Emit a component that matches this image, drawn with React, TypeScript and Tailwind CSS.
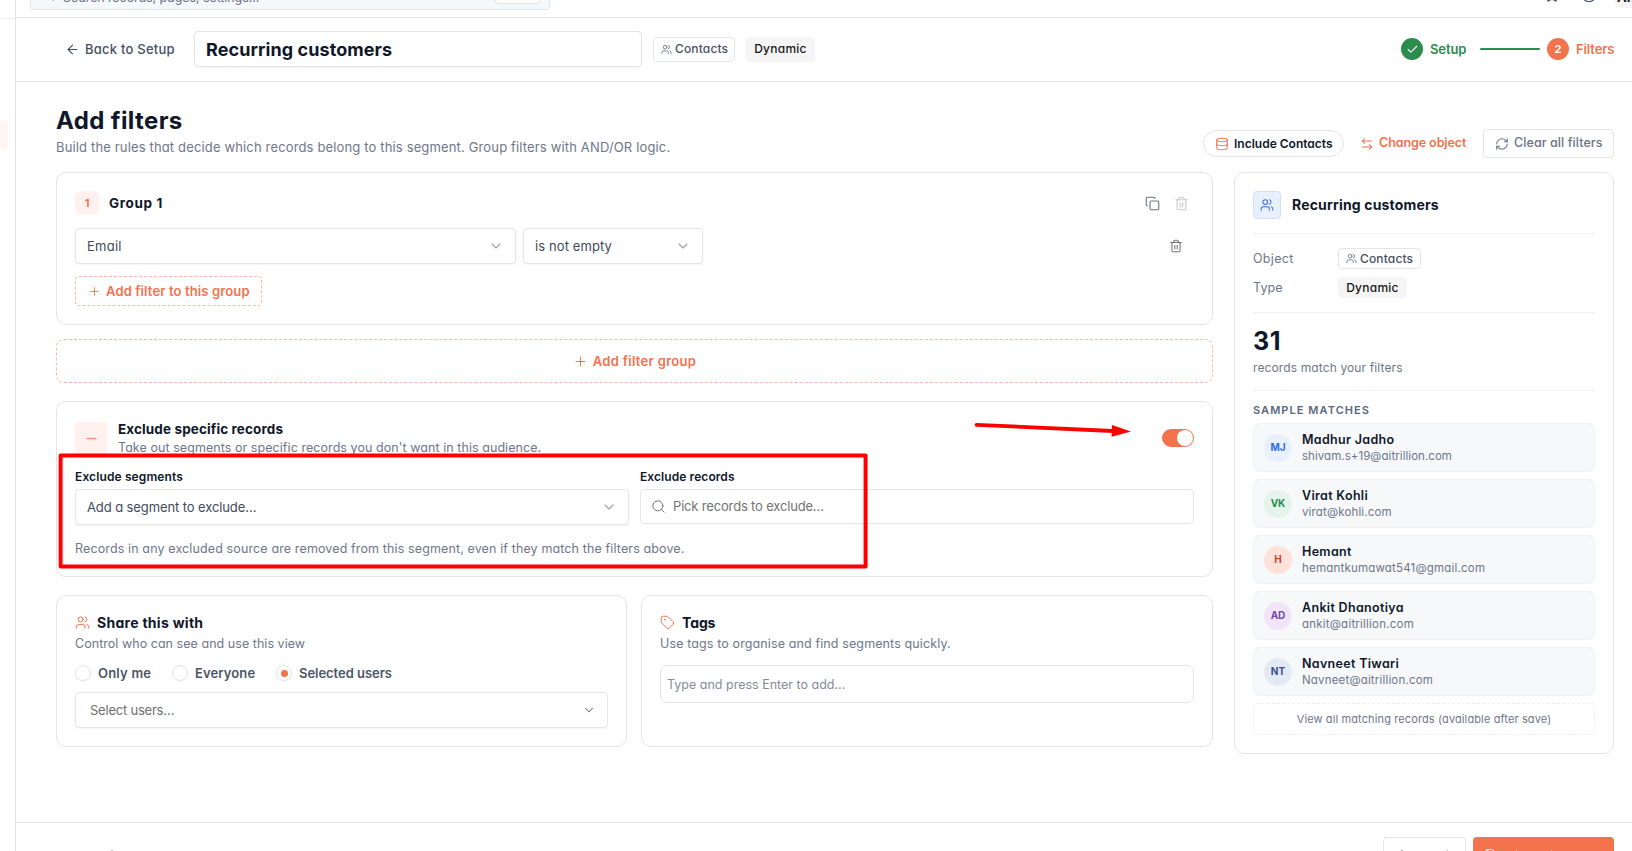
import React from "react";
import {
  ArrowLeft,
  ArrowLeftRight,
  Check,
  ChevronDown,
  CircleHelp,
  Copy,
  Database,
  Minus,
  Plus,
  RefreshCw,
  Save,
  Search,
  Star,
  Tag,
  Trash2,
  Users,
} from "lucide-react";

const matches = [
  { initials: "MJ", name: "Madhur Jadho", email: "shivam.s+19@aitrillion.com", tone: "bg-[#e8effd] text-[#2f6bea]", fit: "tracking-[0.05px]" },
  { initials: "VK", name: "Virat Kohli", email: "virat@kohli.com", tone: "bg-[#e4f4ea] text-[#2d8a50]", fit: "tracking-[0.15px]" },
  { initials: "H", name: "Hemant", email: "hemantkumawat541@gmail.com", tone: "bg-[#fde1da] text-[#c9482a]", fit: "tracking-[0.2px]" },
  { initials: "AD", name: "Ankit Dhanotiya", email: "ankit@aitrillion.com", tone: "bg-[#f1e4f9] text-[#6f4a9e]", fit: "tracking-[0.22px]" },
  { initials: "NT", name: "Navneet Tiwari", email: "Navneet@aitrillion.com", tone: "bg-[#e4e9f6] text-[#3d4c94]", fit: "tracking-[0.18px]" },
];

function ContactsBadge({ className }: { className: string }) {
  return (
    <span className={`flex items-center gap-[3px] rounded-[4px] border border-[#e4e4e7] bg-white text-[12px] font-medium tracking-[0.15px] text-[#475063] ${className}`}>
      <Users size={11} strokeWidth={1.9} className="shrink-0 text-[#6b7285]" />
      Contacts
    </span>
  );
}

function DynamicBadge({ className }: { className: string }) {
  return (
    <span className={`flex items-center justify-center rounded-[4px] bg-[#f5f5f5] text-[12px] font-medium tracking-[0.26px] text-[#171717] ${className}`}>
      Dynamic
    </span>
  );
}

function SelectBox({ text, className }: { text: string; className: string }) {
  return (
    <div className={`flex h-9 items-center justify-between rounded-[4px] border border-[#e4e4e7] bg-white px-[11px] text-[13px] text-[#3f4a5a] shadow-xs ${className}`}>
      <span className="pt-[2px]">{text}</span>
      <ChevronDown size={16} strokeWidth={1.7} className="text-[#9b9fa8]" />
    </div>
  );
}

function Radio({ label, checked, className }: { label: string; checked?: boolean; className: string }) {
  return (
    <div className={`flex items-center gap-[7px] text-[13px] font-semibold text-[#4b5567] ${className}`}>
      <span className="flex size-4 shrink-0 items-center justify-center rounded-full border border-[#e4e4e7] shadow-xs">
        {checked && <span className="size-[7px] rounded-full bg-[#f4724c]" />}
      </span>
      <span className="pt-[2px]">{label}</span>
    </div>
  );
}

function TopBar() {
  return (
    <div className="h-[18px] shrink-0 overflow-hidden border-b border-[#e4e4e7]">
      <div className="-mt-5 flex h-[30px] items-center pl-[14px]">
        <div className="flex h-[30px] w-[520px] items-center rounded-[4px] border border-[#dfe3ea] bg-[#f5f8fb] pr-[9px] pl-[10px] text-[12.5px] text-[#6b7285]">
          <Search size={14} strokeWidth={1.75} />
          <span className="ml-[8px] pt-[6px] tracking-[-0.08px]">Search records, pages, settings...</span>
          <span className="mb-[2px] ml-auto h-5 w-[45px] rounded-[3px] border border-[#dfe3ea] bg-white" />
        </div>
        <div className="ml-auto flex items-center text-[#4b5568]">
          <Star size={16} strokeWidth={1.75} />
          <CircleHelp size={16} strokeWidth={1.75} className="ml-[21px]" />
          <span className="ml-[18px] flex h-[26px] w-[17px] items-center overflow-hidden rounded-bl-[5px] bg-[#f4f4f5] pt-[5px] pl-[2px] text-[13px] font-bold text-[#171717]">
            AR
          </span>
        </div>
      </div>
    </div>
  );
}

function SegmentBar() {
  return (
    <div className="h-16 shrink-0 border-b border-[#e4e4e7] pt-[13px] pr-[18px] pl-[49px]">
      <div className="flex h-9 items-center">
        <div className="flex w-[129px] items-center gap-[5px] text-[13px] font-medium tracking-[0.24px] text-[#475063]">
          <ArrowLeft size={15} strokeWidth={1.7} />
          <span className="pt-[2px]">Back to Setup</span>
        </div>
        <div className="flex h-9 w-[448px] items-center rounded-[4px] border border-[#e4e4e7] px-[11px] text-[18px] font-bold tracking-[0.08px] text-[#0f172a] shadow-xs">
          Recurring customers
        </div>
        <ContactsBadge className="ml-[11px] h-[25px] w-[82px] pl-[7px]" />
        <DynamicBadge className="ml-[11px] h-[25px] w-[69px]" />
        <div className="ml-auto flex items-center text-[13px] font-semibold">
          <span className="flex size-[22px] items-center justify-center rounded-full bg-[#2c8c4e] text-white">
            <Check size={13} strokeWidth={2} />
          </span>
          <span className="ml-[7px] w-[36px] pt-[2px] tracking-[-0.1px] text-[#2c8c4e]">Setup</span>
          <span className="ml-[14px] h-[2px] w-[60px] rounded-full bg-[#2c8c4e]" />
          <span className="ml-[7px] flex size-[22px] items-center justify-center rounded-full bg-[#f4724c] text-[11px] font-bold text-white">2</span>
          <span className="ml-[7px] w-[38px] pt-[2px] tracking-[-0.1px] text-[#f4724c]">Filters</span>
        </div>
      </div>
    </div>
  );
}

function GroupCard() {
  return (
    <div className="h-[153px] rounded-[10px] border border-[#e4e4e7] p-[18px]">
      <div className="flex h-6 items-center">
        <span className="flex size-6 items-center justify-center rounded-[6px] bg-[#fff2ee] text-[11px] font-bold text-[#f4724c]">1</span>
        <span className="ml-[10px] text-[13.5px] font-bold tracking-[0.65px] text-[#0f172a]">Group 1</span>
        <div className="mr-px ml-auto flex gap-[5px] pt-[1px]">
          <span className="flex size-6 items-center justify-center">
            <Copy size={15} strokeWidth={1.75} className="text-[#6b7285]" />
          </span>
          <span className="flex size-6 items-center justify-center">
            <Trash2 size={15} strokeWidth={1.75} className="text-[#c7c9d0]" />
          </span>
        </div>
      </div>
      <div className="mt-[13px] flex h-9 items-center">
        <SelectBox text="Email" className="w-[441px] tracking-[0.25px]" />
        <SelectBox text="is not empty" className="ml-[7px] w-[180px] tracking-[0.1px]" />
        <span className="ml-auto flex w-9 justify-center">
          <Trash2 size={14} strokeWidth={1.75} className="text-[#6f6f6f]" />
        </span>
      </div>
      <div className="mt-3 flex h-[30px] w-[187px] items-center gap-[5px] rounded-[4px] border border-dashed border-[#f9b8a4] pl-[12px] text-[13px] font-semibold tracking-[0.13px] whitespace-nowrap text-[#f4724c]">
        <Plus size={13} strokeWidth={1.6} />
        <span className="pt-[2px]">Add filter to this group</span>
      </div>
    </div>
  );
}

function ExcludeCard() {
  return (
    <div className="mt-[18px] h-[176px] rounded-[10px] border border-[#e4e4e7] px-[18px] pt-[17px]">
      <div className="flex h-[38px] items-center">
        <span className="flex size-8 items-center justify-center rounded-[4px] bg-[#fff2ee] text-[#f99679]">
          <Minus size={15} strokeWidth={2.2} />
        </span>
        <div className="ml-[11px]">
          <div className="h-[19px] text-[13.5px] leading-[18px] font-bold tracking-[0.12px] text-[#0f172a]">Exclude specific records</div>
          <div className="h-[18px] text-[12.5px] leading-[18px] tracking-[0.06px] text-[#6f7689]">
            Take out segments or specific records you don't want in this audience.
          </div>
        </div>
        <span className="ml-auto flex h-[18px] w-8 items-center justify-end rounded-full bg-[#f4724c] p-px">
          <span className="size-4 rounded-full bg-white" />
        </span>
      </div>
      <div className="mt-3 grid grid-cols-2 gap-[11px] text-[12px] font-semibold text-[#0f172a]">
        <div>
          <div className="mb-1 h-4 leading-4 tracking-[0.12px]">Exclude segments</div>
          <SelectBox text="Add a segment to exclude…" className="font-normal tracking-[-0.1px]" />
        </div>
        <div>
          <div className="mb-1 h-4 leading-4 tracking-[0.08px]">Exclude records</div>
          <div className="flex h-[35px] items-center gap-[7px] rounded-[4px] border border-[#e4e4e7] px-[10px] text-[13px] font-normal tracking-[-0.17px] text-[#737373]">
            <Search size={15} strokeWidth={1.6} />
            <span className="pt-px">Pick records to exclude…</span>
          </div>
        </div>
      </div>
      <div className="mt-[15px] h-[18px] text-[12.5px] leading-[18px] tracking-[0.125px] text-[#6f7689]">
        Records in any excluded source are removed from this segment, even if they match the filters above.
      </div>
    </div>
  );
}

function ShareAndTags() {
  return (
    <div className="mt-[18px] grid h-[152px] grid-cols-[571px_1fr] gap-[14px]">
      <div className="rounded-[10px] border border-[#e4e4e7] p-[18px]">
        <div className="flex h-[18px] items-center gap-[7px] text-[14px] font-bold tracking-[0.28px] text-[#0f172a]">
          <Users size={15} strokeWidth={1.6} className="mb-px text-[#f4724c]" />
          <span className="pb-[2px]">Share this with</span>
        </div>
        <div className="mt-[3px] h-[18px] text-[12.5px] leading-[18px] tracking-[0.04px] text-[#6f7689]">Control who can see and use this view</div>
        <div className="mt-3 flex h-4 items-center">
          <Radio label="Only me" className="w-[97px] tracking-[0.2px]" />
          <Radio label="Everyone" className="w-[104px] tracking-[0.12px]" />
          <Radio label="Selected users" checked className="tracking-[-0.04px]" />
        </div>
        <div className="mt-[11px] flex h-9 items-center justify-between rounded-[4px] border border-[#e4e4e7] pr-[11px] pl-[14px] text-[13px] tracking-[-0.22px] text-[#6f6f6f] shadow-xs">
          <span className="pt-[2px]">Select users…</span>
          <ChevronDown size={14} strokeWidth={1.75} />
        </div>
      </div>
      <div className="rounded-[10px] border border-[#e4e4e7] p-[18px]">
        <div className="flex h-[18px] items-center gap-[7px] text-[14px] font-bold tracking-[-0.1px] text-[#0f172a]">
          <Tag size={15} strokeWidth={1.6} className="mb-px text-[#f4724c]" />
          <span className="pb-[2px]">Tags</span>
        </div>
        <div className="mt-[3px] h-[18px] text-[12.5px] leading-[18px] tracking-[0.12px] text-[#6f7689]">Use tags to organise and find segments quickly.</div>
        <div className="mt-3 flex h-[38px] items-center rounded-[7px] border border-[#e4e4e7] pl-[6px] text-[12.5px] text-[#868b97]">
          <span className="pt-[2px]">Type and press Enter to add…</span>
        </div>
      </div>
    </div>
  );
}

function SummaryCard() {
  return (
    <aside className="h-[582px] w-[380px] shrink-0 rounded-[10px] border border-[#e4e4e7] px-[18px] pt-[18px]">
      <div className="flex h-7 items-center gap-[11px]">
        <span className="flex size-7 items-center justify-center rounded-[4px] border border-[#d0dffb] bg-[#e8f0fe] text-[#3b74ec]">
          <Users size={14} strokeWidth={1.75} />
        </span>
        <span className="pb-px text-[14px] font-bold tracking-[0.17px] text-[#0f172a]">Recurring customers</span>
      </div>
      <div className="mt-[14px] border-t border-[#eef0f2]" />
      <div className="mt-[14px] flex h-[21px] items-center text-[12.5px] text-[#6f7689]">
        <span className="w-[85px] pt-[2px] tracking-[0.3px]">Object</span>
        <ContactsBadge className="h-[21px] w-[83px] pl-[7px]" />
      </div>
      <div className="mt-2 flex h-[21px] items-center text-[12.5px] text-[#6f7689]">
        <span className="w-[85px] pt-[2px] tracking-[0.1px]">Type</span>
        <DynamicBadge className="h-[21px] w-[69px]" />
      </div>
      <div className="mt-[14px] border-t border-[#eef0f2]" />
      <div className="mt-[14px] h-7 text-[25px] leading-7 font-bold tracking-[0.6px] text-[#0f172a]">31</div>
      <div className="mt-1 h-[18px] text-[12px] leading-[18px] tracking-[0.12px] text-[#6f7689]">records match your filters</div>
      <div className="mt-[13px] border-t border-[#eef0f2]" />
      <div className="mt-[11px] h-4 text-[11px] leading-4 font-semibold tracking-[1.06px] text-[#5b6780]">SAMPLE MATCHES</div>
      <div className="mt-[5px] flex flex-col gap-[7px]">
        {matches.map((m) => (
          <div key={m.name} className="flex h-[49px] items-center gap-[10px] rounded-[7px] border border-[#eff1f4] bg-[#f6f8fa] px-[10px]">
            <span className={`flex size-7 items-center justify-center rounded-full text-[10px] font-bold ${m.tone}`}>{m.initials}</span>
            <div>
              <div className="h-4 text-[12.5px] leading-4 font-semibold tracking-[0.32px] text-[#0f172a]">{m.name}</div>
              <div className={`h-4 text-[11.5px] leading-4 text-[#6f7689] ${m.fit}`}>{m.email}</div>
            </div>
          </div>
        ))}
        <div className="flex h-8 items-center justify-center rounded-[4px] border border-dashed border-[#eceef1] text-[11px] tracking-[0.12px] text-[#6f7689]">
          View all matching records (available after save)
        </div>
      </div>
    </aside>
  );
}

export default function App() {
  return (
    <div className="relative flex h-[851px] w-full overflow-hidden bg-white font-['Inter',sans-serif] [font-feature-settings:'cv11']">
      <div className="w-4 shrink-0 border-r border-[#e2e2e8]">
        <div className="h-[19px] border-b border-[#eeeef1]" />
        <div className="mt-[101px] h-[29px] w-2 rounded-r-[5px] bg-[#fff5f2]" />
      </div>

      <div className="flex min-w-0 flex-1 flex-col">
        <TopBar />
        <SegmentBar />

        <main className="h-[740px] shrink-0 pt-[22px] pr-[18px] pl-[40px]">
          <div className="flex h-[54px] items-end justify-between">
            <div>
              <h1 className="h-[33px] text-[24px] leading-[33px] font-bold tracking-[0.38px] text-[#0f172a]">Add filters</h1>
              <p className="mt-px h-5 text-[13px] leading-[19px] tracking-[0.15px] text-[#6f7689]">
                Build the rules that decide which records belong to this segment. Group filters with AND/OR logic.
              </p>
            </div>
            <div className="flex h-[29px] items-center whitespace-nowrap">
              <div className="flex h-[27px] w-[141px] items-center gap-[5px] rounded-full border border-[#e4e4e7] pl-[11px] text-[12px] font-semibold text-[#0f172a]">
                <Database size={14} strokeWidth={1.75} className="text-[#f4724c]" />
                Include Contacts
              </div>
              <div className="ml-[16px] flex w-[123px] items-center gap-[5px] text-[12.5px] font-semibold tracking-[-0.08px] text-[#f4724c]">
                <ArrowLeftRight size={14} strokeWidth={1.75} />
                Change object
              </div>
              <div className="flex h-[29px] w-[131px] items-center gap-[5px] rounded-[4px] border border-[#e4e4e7] pl-[11px] text-[12.5px] font-medium tracking-[0.08px] text-[#6b7285]">
                <RefreshCw size={14} strokeWidth={1.75} />
                Clear all filters
              </div>
            </div>
          </div>

          <div className="mt-[14px] flex items-start gap-[21px]">
            <div className="min-w-0 flex-1">
              <GroupCard />
              <div className="mt-[14px] flex h-11 items-center justify-center gap-[5px] rounded-[8px] border border-dashed border-[#f9b8a4] text-[13px] font-semibold tracking-[0.32px] text-[#f4724c]">
                <Plus size={15} strokeWidth={1.6} />
                <span className="pt-[2px]">Add filter group</span>
              </div>
              <ExcludeCard />
              <ShareAndTags />
            </div>
            <SummaryCard />
          </div>
        </main>

        <footer className="flex h-[29px] shrink-0 items-start overflow-hidden border-t border-[#e4e4e7] pt-[14px] pr-[18px] pl-[95px]">
          <span className="mt-[13px] h-px w-[2px] bg-[#b9bcc4]" />
          <div className="ml-auto flex h-9 w-[83px] justify-between rounded-[4px] border border-[#e4e4e7] px-[17px] pt-3">
            <span className="h-px w-[2px] bg-[#a5a9b3]" />
            <span className="h-px w-px bg-[#a5a9b3]" />
          </div>
          <div className="ml-[7px] flex h-9 w-[141px] items-start rounded-[4px] bg-[#f4724c] pt-[11px] pl-[11px] text-white">
            <Save size={13} strokeWidth={1.75} />
            <span className="mt-[2px] ml-[19px] h-px w-px bg-white/60" />
            <span className="mt-[2px] ml-[34px] h-px w-px bg-white/60" />
          </div>
        </footer>
      </div>

      <svg className="pointer-events-none absolute inset-0" width="1632" height="851" viewBox="0 0 1632 851" fill="none">
        <rect x="60.6" y="455.4" width="805" height="111" stroke="#ff0000" strokeWidth="4" strokeLinejoin="round" />
        <path d="M976.5 424.8 L1113 431" stroke="#ff0000" strokeWidth="3.8" strokeLinecap="round" />
        <path d="M1112 425 L1131 431.6 L1111.6 436.8 Z" fill="#ff0000" />
      </svg>
    </div>
  );
}
